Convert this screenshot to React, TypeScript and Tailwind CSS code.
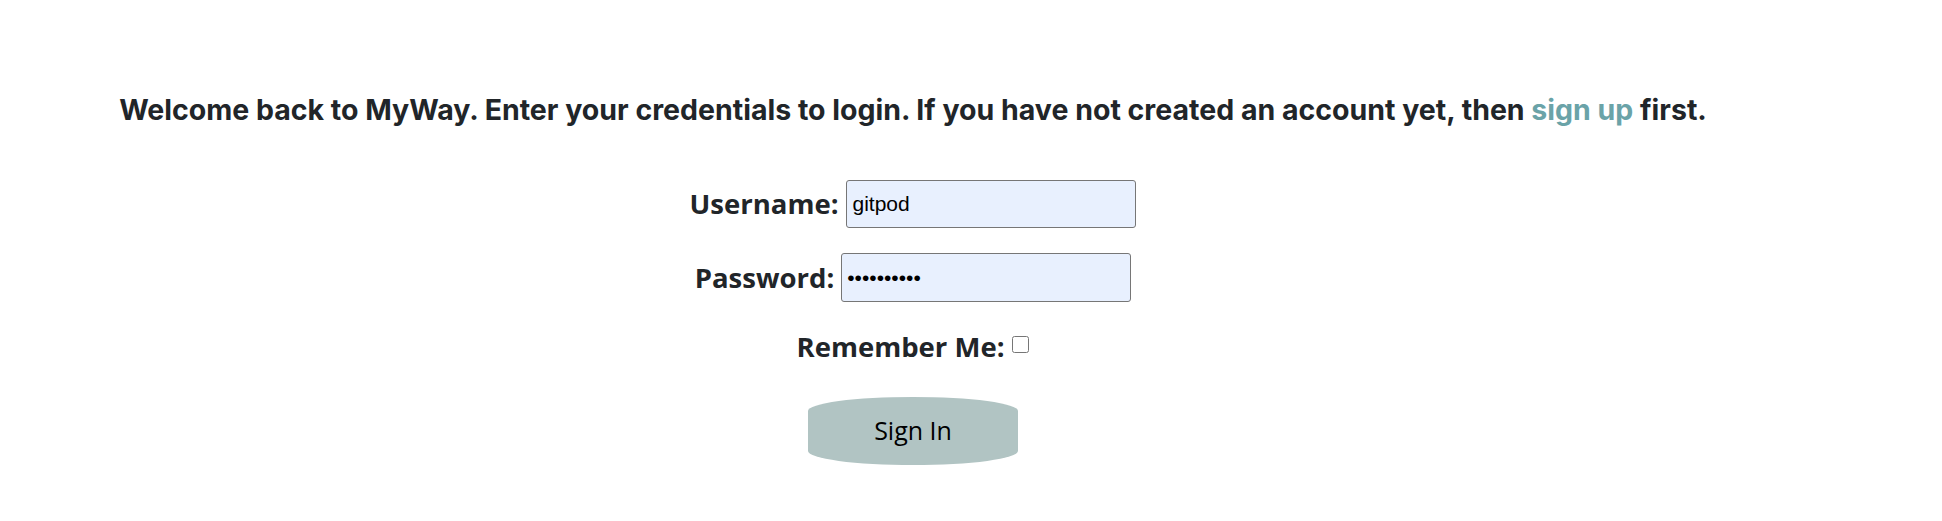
import React from "react";

export default function App() {
  return (
    <div className="w-[1942px] h-[521px] bg-white overflow-hidden">
      <div className="w-[1826px] flex flex-col items-center pt-[93px] text-[#212529]">
        <p className="font-['Inter',sans-serif] font-bold text-[28.5px] leading-[34px] whitespace-nowrap">
          Welcome back to MyWay. Enter your credentials to login. If you have not created an account yet, then{" "}
          <a href="#" className="text-[#6aa3a8]">sign up</a> first.
        </p>
        <form className="flex flex-col items-center mt-[53px] font-['Open_Sans',sans-serif]" onSubmit={(e) => e.preventDefault()}>
          <div className="flex items-center gap-[8px]">
            <label className="font-bold text-[27.5px] leading-[34px]">Username:</label>
            <input
              type="text"
              defaultValue="gitpod"
              className="w-[290px] h-[48px] px-[5px] bg-[#e8f0fe] border border-[#767676] rounded-[3px] text-[21px] text-black font-['Liberation_Sans',Arial,sans-serif] outline-none"
            />
          </div>
          <div className="flex items-center gap-[7px] mt-[25px]">
            <label className="font-bold text-[27.5px] leading-[34px]">Password:</label>
            <input
              type="password"
              defaultValue="gitpod1234"
              className="w-[290px] h-[49px] px-[5px] bg-[#e8f0fe] border border-[#767676] rounded-[3px] text-[21px] text-black font-['Liberation_Sans',Arial,sans-serif] outline-none"
            />
          </div>
          <div className="flex items-center gap-[8px] mt-[28px]">
            <label className="font-bold text-[27.5px] leading-[34px]">Remember Me:</label>
            <input type="checkbox" className="w-[17px] h-[17px] -mt-[6px]" />
          </div>
          <button
            type="submit"
            className="mt-[33px] w-[210px] h-[68px] bg-[#b1c4c3] rounded-[105px/14px] text-[25px] text-black font-['Open_Sans',sans-serif]"
          >
            Sign In
          </button>
        </form>
      </div>
    </div>
  );
}
